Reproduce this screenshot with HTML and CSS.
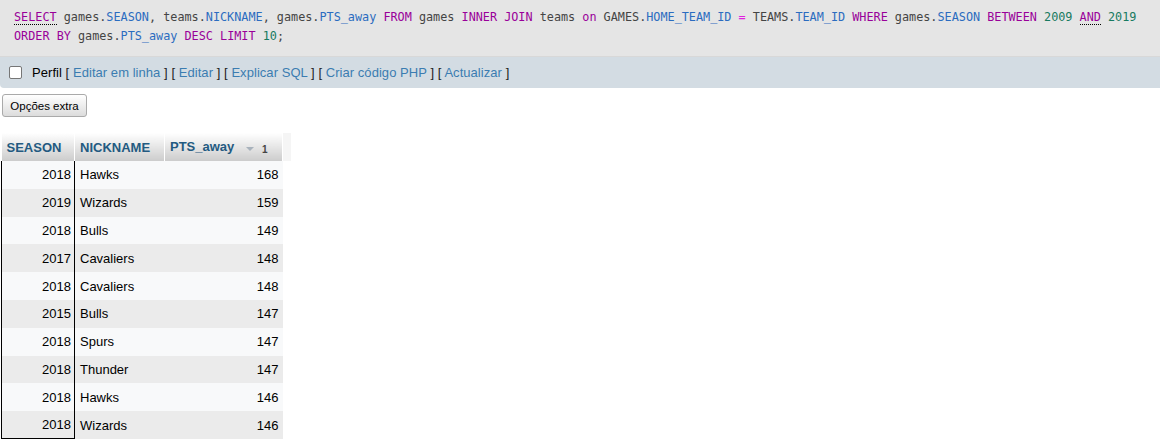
FILE: index.html
```html
<!DOCTYPE html>
<html>
<head>
<meta charset="utf-8">
<link rel="stylesheet" href="styles.css">
</head>
<body>
<div class="sql">
<div class="sql-line"><span class="kw doc">SELECT</span> games.<span class="id">SEASON</span>, teams.<span class="id">NICKNAME</span>, games.<span class="id">PTS_away</span> <span class="kw">FROM</span> games <span class="kw">INNER</span> <span class="kw">JOIN</span> teams <span class="kw">on</span> GAMES.<span class="id">HOME_TEAM_ID</span> <span class="op">=</span> TEAMS.<span class="id">TEAM_ID</span> <span class="kw">WHERE</span> games.<span class="id">SEASON</span> <span class="kw">BETWEEN</span> <span class="num">2009</span> <span class="kw doc">AND</span> <span class="num">2019</span></div>
<div class="sql-line"><span class="kw">ORDER</span> <span class="kw">BY</span> games.<span class="id">PTS_away</span> <span class="kw">DESC</span> <span class="kw">LIMIT</span> <span class="num">10</span>;</div>
</div>
<div class="toolbar"><span class="cb"></span><span class="plain">Perfil</span> <span class="br">[</span> <a class="lnk">Editar em linha</a> <span class="br">]</span> <span class="br">[</span> <a class="lnk">Editar</a> <span class="br">]</span> <span class="br">[</span> <a class="lnk">Explicar SQL</a> <span class="br">]</span> <span class="br">[</span> <a class="lnk">Criar código PHP</a> <span class="br">]</span> <span class="br">[</span> <a class="lnk">Actualizar</a> <span class="br">]</span></div>
<div class="btn-row"><button class="btn">Opções extra</button></div>
<div class="table-wrap">
<table class="data">
<thead>
<tr><th class="c1">SEASON</th><th class="c2">NICKNAME</th><th class="c3">PTS_away <span class="sort"><span class="tri"></span><span class="ord">1</span></span></th><th class="c4"></th></tr>
</thead>
<tbody>
<tr><td class="c1">2018</td><td class="c2">Hawks</td><td class="c3">168</td></tr>
<tr><td class="c1">2019</td><td class="c2">Wizards</td><td class="c3">159</td></tr>
<tr><td class="c1">2018</td><td class="c2">Bulls</td><td class="c3">149</td></tr>
<tr><td class="c1">2017</td><td class="c2">Cavaliers</td><td class="c3">148</td></tr>
<tr><td class="c1">2018</td><td class="c2">Cavaliers</td><td class="c3">148</td></tr>
<tr><td class="c1">2015</td><td class="c2">Bulls</td><td class="c3">147</td></tr>
<tr><td class="c1">2018</td><td class="c2">Spurs</td><td class="c3">147</td></tr>
<tr><td class="c1">2018</td><td class="c2">Thunder</td><td class="c3">147</td></tr>
<tr><td class="c1">2018</td><td class="c2">Hawks</td><td class="c3">146</td></tr>
<tr class="last"><td class="c1">2018</td><td class="c2">Wizards</td><td class="c3">146</td></tr>
</tbody>
</table>
</div>
</body>
</html>
```
FILE: styles.css
```css
html, body {
  margin: 0;
  padding: 0;
  background: #fff;
  font-family: "Liberation Sans", Arial, sans-serif;
  font-size: 13px;
  color: #000;
}
.sql {
  background: #e5e5e5;
  height: 57px;
  box-sizing: border-box;
  padding: 8px 0 0 14px;
  font-family: "DejaVu Sans Mono", monospace;
  font-size: 11.8px;
  color: #444;
  white-space: nowrap;
  border-bottom: 1px solid #d8d8d8;
}
.sql-line {
  line-height: 19px;
}
.kw { color: #909; }
.id { color: #2b6cc0; }
.num { color: #177a5f; }
.op { color: #e020e0; }
.doc {
  border-bottom: 1px dotted #000;
}
.toolbar {
  background: #d3dce3;
  height: 31px;
  line-height: 31px;
  padding-left: 9px;
  border-bottom-left-radius: 4px;
  white-space: nowrap;
  font-size: 13px;
  letter-spacing: 0.05px;
}
.cb {
  display: inline-block;
  vertical-align: middle;
  width: 11px;
  height: 11px;
  border: 1px solid #767676;
  border-radius: 2px;
  background: #fff;
  margin: -2px 10px 0 0;
}
.plain { color: #000; }
.br { color: #222; }
.lnk { color: #3b7cb1; text-decoration: none; }
.btn-row {
  padding: 6px 0 0 2px;
  height: 24px;
}
.btn {
  height: 23px;
  width: 85px;
  box-sizing: border-box;
  font-family: "Liberation Sans", Arial, sans-serif;
  font-size: 11.5px;
  color: #000;
  border: 1px solid #aaa;
  border-radius: 3px;
  background: linear-gradient(#fff, #dcdcdc);
  padding: 0;
}
.table-wrap {
  padding: 15px 0 0 1px;
}
.data {
  border-collapse: collapse;
}
.data th {
  height: 28px;
  padding: 0 5px;
  box-sizing: border-box;
  text-align: left;
  font-weight: bold;
  color: #235a81;
  background: linear-gradient(#fff, #ccc);
  border-right: 1px solid #fff;
  white-space: nowrap;
}
.data th.c1 { width: 73px; }
.data th.c2 { width: 90px; }
.data th.c3 { width: 118px; }
.data th.c4 {
  width: 8px;
  padding: 0;
  background: #f5f5f5;
  border: none;
}
.sort {
  display: inline-flex;
  align-items: center;
  margin-left: 8px;
}
.tri {
  width: 0;
  height: 0;
  border-left: 4px solid transparent;
  border-right: 4px solid transparent;
  border-top: 4px solid #a8b2bc;
  margin-right: 8px;
}
.ord {
  font-size: 10px;
  font-weight: bold;
  color: #444;
}
.data td {
  height: 27.8px;
  padding: 0 4px;
  box-sizing: border-box;
  color: #000;
  white-space: nowrap;
}
.data tbody tr:nth-child(odd) td { background: #f8f9fa; }
.data tbody tr:nth-child(even) td { background: #ebebeb; }
.data td.c1 {
  text-align: right;
  border-left: 1px solid #000;
  border-right: 1px solid #000;
  padding-right: 3px;
}
.data tr.last td.c1 { border-bottom: 1px solid #000; }
.data td.c2 { padding-left: 5px; }
.data td.c3 { text-align: right; padding-right: 4px; }
```
